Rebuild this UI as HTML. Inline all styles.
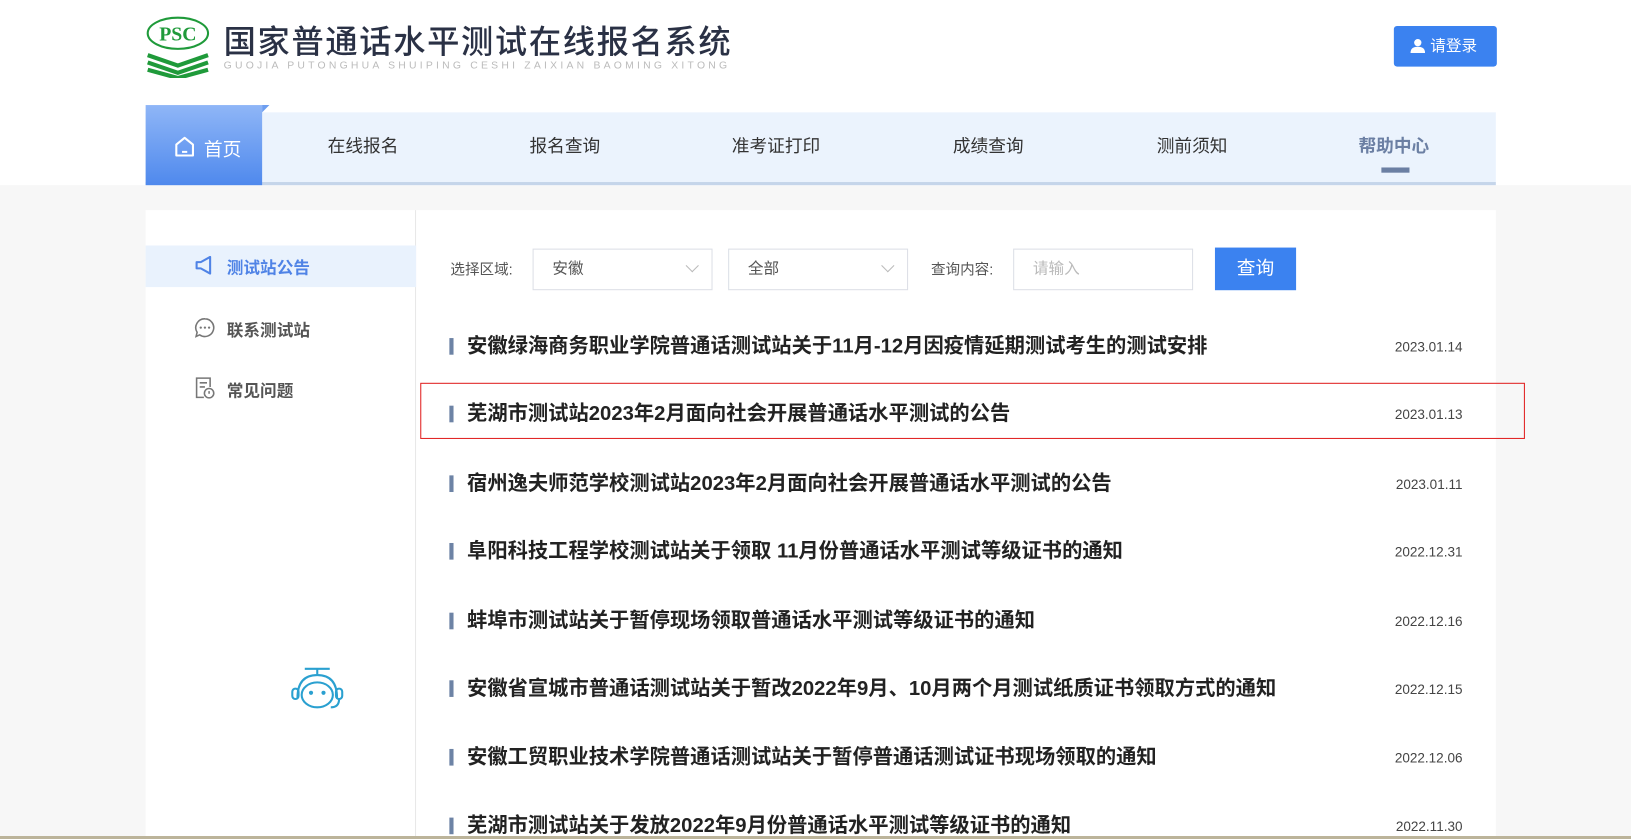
<!DOCTYPE html>
<html><head><meta charset="utf-8"><style>
*{margin:0;padding:0;box-sizing:border-box}
html,body{width:1631px;height:839px;overflow:hidden}
body{background:#f7f7f7;font-family:"Liberation Sans","Noto Sans CJK SC",sans-serif;position:relative}
#w{position:absolute;left:0;top:0;width:1568px;height:807px;overflow:hidden;transform:scale(1.0402);transform-origin:0 0}
.top{position:absolute;left:0;top:0;width:1568px;height:178px;background:#fff}
.abs{position:absolute}
.nav{left:140px;top:108px;width:1298px;height:70px;background:#ebf3fd;border-bottom:3px solid #c5d5ea}
.home{left:140px;top:101px;width:112px;height:77px;background:linear-gradient(#8fb6f7,#4f89ed);color:#fff;font-size:18px}
.navitem{top:108px;height:67px;line-height:66px;font-size:17px;color:#333;text-align:center}
.box{left:140px;top:202px;width:1298px;height:605px;background:#fff}
.side{left:140px;top:202px;width:260px;height:605px;border-right:1px solid #e8e8e8}
.row{left:430px;font-size:19.5px;font-weight:bold;color:#222;white-space:nowrap;line-height:24px}
.row:before{content:"";position:absolute;left:2px;top:4px;width:4px;height:16px;background:#6d83a5}
.row span{padding-left:19px}
.date{left:1300px;width:106px;text-align:right;font-size:13px;color:#444}
.sel{height:40px;border:1px solid #dcdfe6;font-size:15px;color:#555;line-height:38px;padding-left:18px;background:#fff}
.sel i{position:absolute;right:14px;top:11px;width:9px;height:9px;border-right:1px solid #bbb;border-bottom:1px solid #bbb;transform:rotate(45deg)}
</style></head><body>
<div id="w">
<div class="top"></div>
<svg class="abs" style="left:140px;top:15px" width="62" height="60" viewBox="0 0 62 60">
<ellipse cx="31" cy="17" rx="29" ry="15" fill="#fff" stroke="#1f9a3a" stroke-width="2"/>
<text x="31" y="24" text-anchor="middle" font-family="Liberation Serif" font-weight="bold" font-size="19" fill="#1f9a3a">PSC</text>
<g stroke="#1f9a3a" stroke-width="4" fill="none"><path d="M2 38 L31 48 L60 38"/><path d="M2 45 L31 55 L60 45"/><path d="M2 52 L31 60 L60 52"/></g>
</svg>
<div class="abs" style="left:215px;top:18px;font-size:31px;line-height:40px;color:#2a3145;letter-spacing:1.6px;font-weight:500;font-family:'Noto Sans CJK SC',sans-serif">国家普通话水平测试在线报名系统</div>
<div class="abs" style="left:215px;top:58px;font-size:10px;line-height:12px;color:#bbb;letter-spacing:3.1px">GUOJIA PUTONGHUA SHUIPING CESHI ZAIXIAN BAOMING XITONG</div>
<div class="abs" style="left:1340px;top:25px;width:99px;height:39px;background:#3b82f0;border-radius:3px;color:#fff;font-size:15px;line-height:39px;padding-left:35px">请登录</div>
<svg class="abs" style="left:1356px;top:37px" width="14" height="14" viewBox="0 0 14 14"><circle cx="7" cy="4" r="3.5" fill="#fff"/><path d="M0 14 Q0 8 7 8 Q14 8 14 14Z" fill="#fff"/></svg>
<div class="abs nav"></div>
<div class="abs home"><svg class="abs" style="left:28px;top:30px" width="19" height="20" viewBox="0 0 19 20"><path d="M1.5 8 L9.5 1.5 L17.5 8 V18.5 H1.5Z" fill="none" stroke="#fff" stroke-width="2" stroke-linejoin="round"/><path d="M7 15h5" stroke="#fff" stroke-width="2"/></svg><span class="abs" style="left:56px;top:29px">首页</span></div>
<div class="abs" style="left:252px;top:101px;width:0;height:0;border-left:7px solid #6d9ef0;border-bottom:7px solid transparent"></div>
<div class="abs navitem" style="left:289px;width:120px">在线报名</div>
<div class="abs navitem" style="left:483px;width:120px">报名查询</div>
<div class="abs navitem" style="left:686px;width:120px">准考证打印</div>
<div class="abs navitem" style="left:890px;width:120px">成绩查询</div>
<div class="abs navitem" style="left:1086px;width:120px">测前须知</div>
<div class="abs navitem" style="left:1280px;width:120px;color:#6b7fa3;font-weight:bold">帮助中心</div>
<div class="abs" style="left:1328px;top:161px;width:27px;height:5px;background:#6b7fa3"></div>
<div class="abs box"></div>
<div class="abs side"></div>
<div class="abs" style="left:140px;top:236px;width:260px;height:40px;background:#e9f2fd"></div>
<svg class="abs" style="left:187px;top:246px" width="20" height="18" viewBox="0 0 20 18"><path d="M2 6h4l9-5v16l-9-5H2z" fill="none" stroke="#4f83e6" stroke-width="2" stroke-linejoin="round"/></svg>
<div class="abs" style="left:218px;top:244px;font-size:16px;font-weight:bold;color:#4f83e6">测试站公告</div>
<svg class="abs" style="left:187px;top:305px" width="20" height="20" viewBox="0 0 20 20"><path d="M10 1.5a8.5 8.5 0 1 1 -5 15.4L1.5 18.5l1-4A8.5 8.5 0 0 1 10 1.5z" fill="none" stroke="#777" stroke-width="1.5"/><circle cx="6" cy="10" r="1.1" fill="#777"/><circle cx="10" cy="10" r="1.1" fill="#777"/><circle cx="14" cy="10" r="1.1" fill="#777"/></svg>
<div class="abs" style="left:218px;top:304px;font-size:16px;font-weight:bold;color:#555">联系测试站</div>
<svg class="abs" style="left:187px;top:362px" width="20" height="22" viewBox="0 0 20 22"><path d="M9 20H2V1.5h13V10" fill="none" stroke="#777" stroke-width="1.5"/><path d="M5 6h7M5 10h5" stroke="#777" stroke-width="1.5"/><circle cx="14" cy="16" r="4.5" fill="none" stroke="#777" stroke-width="1.5"/><path d="M14 14v2.5" stroke="#777" stroke-width="1.5"/></svg>
<div class="abs" style="left:218px;top:362px;font-size:16px;font-weight:bold;color:#555">常见问题</div>
<svg class="abs" style="left:278px;top:636px" width="60" height="46" viewBox="0 0 60 46"><path d="M15 7h24M27 7v5" stroke="#2aa0d0" stroke-width="2"/><path d="M8 35 Q8 13 27 13 Q46 13 46 35" fill="none" stroke="#2aa0d0" stroke-width="2"/><ellipse cx="27" cy="32" rx="15" ry="12" fill="none" stroke="#2aa0d0" stroke-width="2"/><rect x="3" y="26" width="6" height="10" rx="3" fill="none" stroke="#2aa0d0" stroke-width="2"/><rect x="45" y="26" width="6" height="10" rx="3" fill="none" stroke="#2aa0d0" stroke-width="2"/><circle cx="21" cy="30" r="2" fill="#2aa0d0"/><circle cx="33" cy="30" r="2" fill="#2aa0d0"/><path d="M48 36 Q48 44 40 44" fill="none" stroke="#2aa0d0" stroke-width="2"/></svg>
<div class="abs" style="left:433px;top:249px;font-size:14px;color:#555">选择区域:</div>
<div class="abs sel" style="left:512px;top:239px;width:173px">安徽<i></i></div>
<div class="abs sel" style="left:700px;top:239px;width:173px">全部<i></i></div>
<div class="abs" style="left:895px;top:249px;font-size:14px;color:#555">查询内容:</div>
<div class="abs sel" style="left:974px;top:239px;width:173px;color:#bbb">请输入</div>
<div class="abs" style="left:1168px;top:238px;width:78px;height:41px;background:#3b82f0;color:#fff;font-size:18px;line-height:41px;text-align:center">查询</div>
<div class="abs" style="left:404px;top:368px;width:1062px;height:54px;border:1px solid #e02020"></div>
<div class="abs row" style="top:321px"><span>安徽绿海商务职业学院普通话测试站关于11月-12月因疫情延期测试考生的测试安排</span></div><div class="abs date" style="top:326px">2023.01.14</div>
<div class="abs row" style="top:386px"><span>芜湖市测试站2023年2月面向社会开展普通话水平测试的公告</span></div><div class="abs date" style="top:391px">2023.01.13</div>
<div class="abs row" style="top:453px"><span>宿州逸夫师范学校测试站2023年2月面向社会开展普通话水平测试的公告</span></div><div class="abs date" style="top:458px">2023.01.11</div>
<div class="abs row" style="top:518px"><span>阜阳科技工程学校测试站关于领取 11月份普通话水平测试等级证书的通知</span></div><div class="abs date" style="top:523px">2022.12.31</div>
<div class="abs row" style="top:585px"><span>蚌埠市测试站关于暂停现场领取普通话水平测试等级证书的通知</span></div><div class="abs date" style="top:590px">2022.12.16</div>
<div class="abs row" style="top:650px"><span>安徽省宣城市普通话测试站关于暂改2022年9月、10月两个月测试纸质证书领取方式的通知</span></div><div class="abs date" style="top:655px">2022.12.15</div>
<div class="abs row" style="top:716px"><span>安徽工贸职业技术学院普通话测试站关于暂停普通话测试证书现场领取的通知</span></div><div class="abs date" style="top:721px">2022.12.06</div>
<div class="abs row" style="top:782px"><span>芜湖市测试站关于发放2022年9月份普通话水平测试等级证书的通知</span></div><div class="abs date" style="top:787px">2022.11.30</div>
</div>
<div class="abs" style="left:0;top:836px;width:1631px;height:3px;background:#bcb49a"></div>
</body></html>
